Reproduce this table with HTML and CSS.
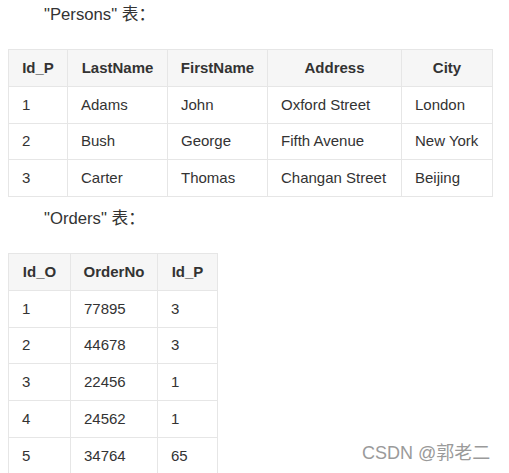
FILE: index.html
```html
<!DOCTYPE html>
<html lang="zh">
<head>
<meta charset="utf-8">
<link rel="stylesheet" href="styles.css">
</head>
<body>
<div class="page">
  <p class="caption">"Persons" 表：</p>
  <table class="grid persons">
    <colgroup><col class="c1"><col class="c2"><col class="c3"><col class="c4"><col class="c5"></colgroup>
    <thead>
      <tr><th>Id_P</th><th>LastName</th><th>FirstName</th><th>Address</th><th>City</th></tr>
    </thead>
    <tbody>
      <tr><td>1</td><td>Adams</td><td>John</td><td>Oxford Street</td><td>London</td></tr>
      <tr><td>2</td><td>Bush</td><td>George</td><td>Fifth Avenue</td><td>New York</td></tr>
      <tr><td>3</td><td>Carter</td><td>Thomas</td><td>Changan Street</td><td>Beijing</td></tr>
    </tbody>
  </table>
  <p class="caption second">"Orders" 表：</p>
  <table class="grid orders">
    <colgroup><col class="c1"><col class="c2"><col class="c3"></colgroup>
    <thead>
      <tr><th>Id_O</th><th>OrderNo</th><th>Id_P</th></tr>
    </thead>
    <tbody>
      <tr><td>1</td><td>77895</td><td>3</td></tr>
      <tr><td>2</td><td>44678</td><td>3</td></tr>
      <tr><td>3</td><td>22456</td><td>1</td></tr>
      <tr><td>4</td><td>24562</td><td>1</td></tr>
      <tr><td>5</td><td>34764</td><td>65</td></tr>
    </tbody>
  </table>
</div>
<div class="watermark">CSDN @郭老二</div>
</body>
</html>
```
FILE: styles.css
```css
html, body {
  margin: 0;
  padding: 0;
  background: #fff;
}
body {
  font-family: "Liberation Sans", Arial, "Noto Sans CJK SC", sans-serif;
  color: #333;
  overflow: hidden;
}
.page {
  padding: 0 8px;
}
.caption {
  margin: 3px 0 22px 0;
  padding-left: 36px;
  font-size: 16.7px;
  line-height: 24px;
  color: #333;
}
.caption.second {
  margin-top: 10px;
  margin-bottom: 22px;
}
.grid {
  border-collapse: collapse;
  font-size: 15px;
  table-layout: fixed;
}
.persons { width: 484px; }
.persons .c1 { width: 59px; }
.persons .c2 { width: 100px; }
.persons .c3 { width: 100px; }
.persons .c4 { width: 134px; }
.persons .c5 { width: 91px; }
.orders { width: 209px; }
.orders .c1 { width: 62px; }
.orders .c2 { width: 87px; }
.orders .c3 { width: 60px; }
.grid th, .grid td {
  border: 1px solid #e6e6e6;
  padding: 0 13px;
  height: 36.75px;
  box-sizing: border-box;
  line-height: 20px;
  white-space: nowrap;
}
.grid th {
  background: #f6f6f6;
  font-weight: bold;
  text-align: center;
  padding: 0 6px;
}
.grid td {
  text-align: left;
}
.watermark {
  position: absolute;
  left: 362px;
  top: 442px;
  font-family: "Liberation Sans", Arial, "Noto Sans CJK SC", sans-serif;
  font-size: 18px;
  line-height: 22px;
  color: #9a9a9a;
  text-shadow: 0 0 1px #fff;
}
```
